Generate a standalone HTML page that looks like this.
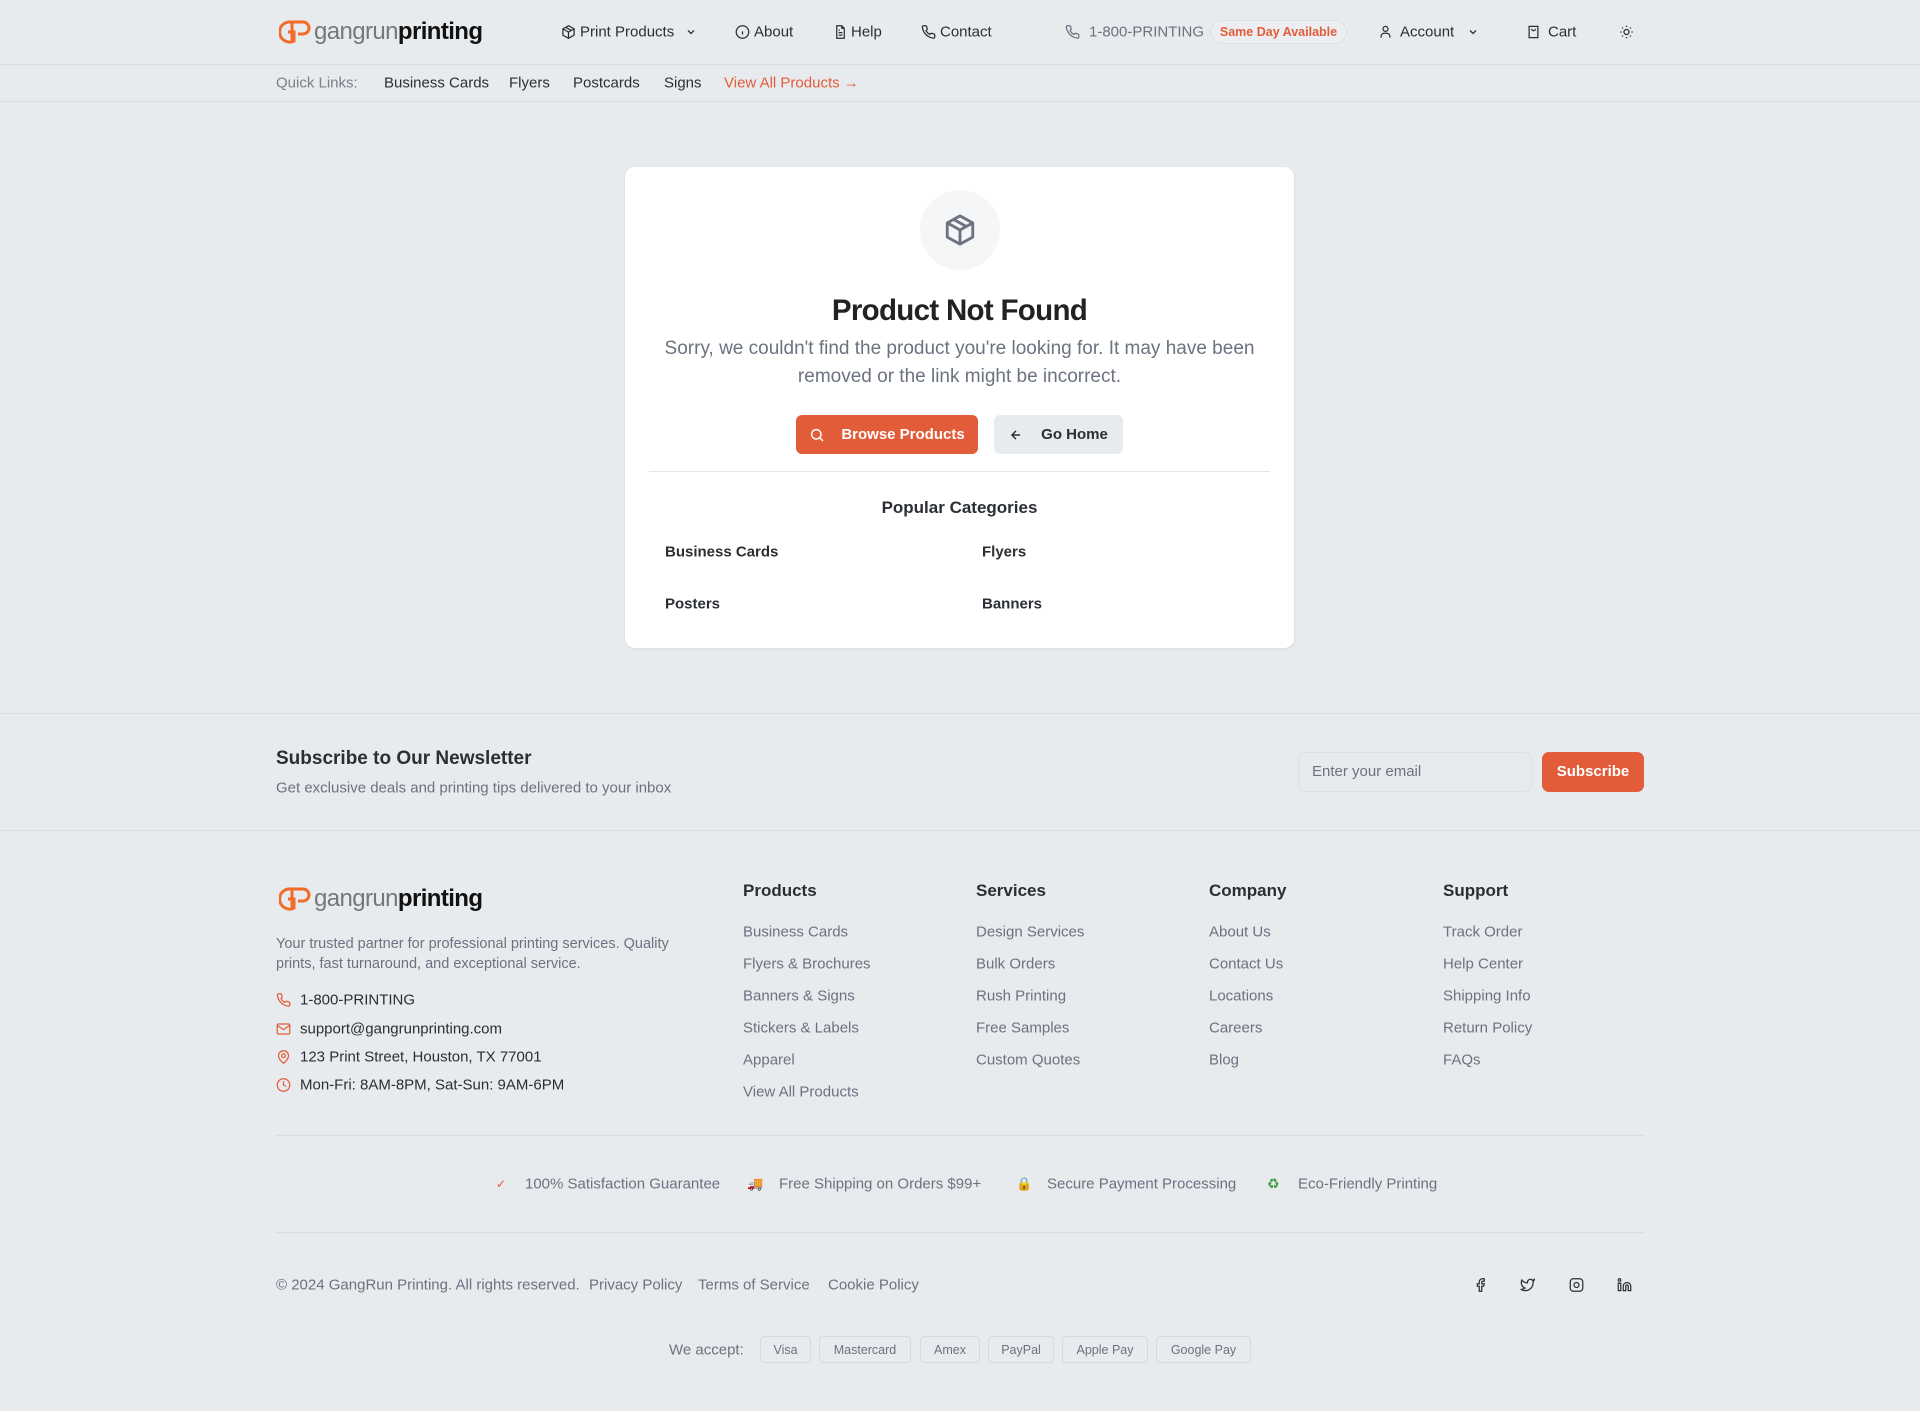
<!DOCTYPE html>
<html><head><meta charset="utf-8"><style>
*{margin:0;padding:0;box-sizing:border-box}
body{width:1920px;height:1411px;background:#e8ebee;font-family:"Liberation Sans",sans-serif;color:#1f2328;position:relative;overflow:hidden}
.a{position:absolute;white-space:nowrap}
.c{transform:translateY(-50%)}
svg{display:block}
.ic{position:absolute;transform:translateY(-50%)}
.hl{position:absolute;left:0;width:1920px;height:1px;background:#d9dde2}
.nav{font-size:15px;color:#2b2f33}
.gray{color:#6b7280}
.lk{font-size:15px;color:#6b7280}
.h4{font-size:17px;font-weight:bold;color:#2b2f33}
.pill{position:absolute;top:1336px;height:27px;border:1px solid #d6dadf;border-radius:4px;font-size:12.5px;color:#6b7280;display:flex;align-items:center;justify-content:center}
</style></head><body>

<!-- header -->
<div class="a c" style="left:279px;top:32px;display:flex;align-items:center">
<svg width="34" height="28" viewBox="0 0 34 28"><path d="M15 5 A10 10 0 1 0 15 23 L15 14 L9 14" fill="none" stroke="#f26b2b" stroke-width="3"/><path d="M13 24 L13 4 L24 4 A6 6 0 0 1 24 16 L19 16" fill="none" stroke="#f26b2b" stroke-width="3"/></svg>
<span style="font-size:24px;color:#777;letter-spacing:-0.6px;margin-left:1px">gangrun</span><span style="font-size:24px;font-weight:bold;color:#111;letter-spacing:-0.6px">printing</span>
</div>
<svg class="ic" style="left:561px;top:32px" width="15" height="15" viewBox="0 0 24 24" fill="none" stroke="#2b2f33" stroke-width="2"><path d="M12 2 3 7v10l9 5 9-5V7z M3 7l9 5 9-5 M12 12v10 M7.5 4.5l9 5"/></svg>
<div class="a c nav" style="left:580px;top:32px">Print Products</div>
<svg class="ic" style="left:685px;top:32px" width="12" height="12" viewBox="0 0 24 24" fill="none" stroke="#2b2f33" stroke-width="2.5"><path d="M6 9l6 6 6-6"/></svg>
<svg class="ic" style="left:735px;top:32px" width="15" height="15" viewBox="0 0 24 24" fill="none" stroke="#2b2f33" stroke-width="2"><circle cx="12" cy="12" r="10"/><path d="M12 16v-5M12 8h.01"/></svg>
<div class="a c nav" style="left:754px;top:32px">About</div>
<svg class="ic" style="left:833px;top:32px" width="15" height="15" viewBox="0 0 24 24" fill="none" stroke="#2b2f33" stroke-width="2"><path d="M14 2H6v20h12V6z M14 2v4h4 M9 13h6M9 17h6M9 9h2"/></svg>
<div class="a c nav" style="left:851px;top:32px">Help</div>
<svg class="ic" style="left:921px;top:32px" width="15" height="15" viewBox="0 0 24 24" fill="none" stroke="#2b2f33" stroke-width="2"><path d="M22 16.9v3a2 2 0 0 1-2.2 2 19.8 19.8 0 0 1-8.6-3.1 19.5 19.5 0 0 1-6-6A19.8 19.8 0 0 1 2.1 4.200 2 2 0 0 1 4.1 2h3a2 2 0 0 1 2 1.7c.1 1 .4 1.9.7 2.8a2 2 0 0 1-.5 2.1L8 9.9a16 16 0 0 0 6 6l1.3-1.3a2 2 0 0 1 2.1-.4c.9.3 1.8.6 2.8.7a2 2 0 0 1 1.7 2z"/></svg>
<div class="a c nav" style="left:940px;top:32px">Contact</div>
<svg class="ic" style="left:1065px;top:32px" width="15" height="15" viewBox="0 0 24 24" fill="none" stroke="#6b7280" stroke-width="2"><path d="M22 16.9v3a2 2 0 0 1-2.2 2 19.8 19.8 0 0 1-8.6-3.1 19.5 19.5 0 0 1-6-6A19.8 19.8 0 0 1 2.1 4.2 2 2 0 0 1 4.1 2h3a2 2 0 0 1 2 1.7c.1 1 .4 1.9.7 2.8a2 2 0 0 1-.5 2.1L8 9.9a16 16 0 0 0 6 6l1.3-1.3a2 2 0 0 1 2.1-.4c.9.3 1.8.6 2.8.7a2 2 0 0 1 1.7 2z"/></svg>
<div class="a c" style="left:1089px;top:32px;font-size:15px;color:#6b7280">1-800-PRINTING</div>
<div class="a c" style="left:1210px;top:32px;width:137px;height:24px;border:1px solid #dde0e4;border-radius:12px;background:#eceef1;color:#e25c3a;font-size:12.5px;font-weight:bold;display:flex;align-items:center;justify-content:center">Same Day Available</div>
<svg class="ic" style="left:1378px;top:32px" width="15" height="15" viewBox="0 0 24 24" fill="none" stroke="#2b2f33" stroke-width="2"><circle cx="12" cy="7" r="4"/><path d="M5 21v-2a5 5 0 0 1 5-5h4a5 5 0 0 1 5 5v2"/></svg>
<div class="a c nav" style="left:1400px;top:32px">Account</div>
<svg class="ic" style="left:1467px;top:32px" width="12" height="12" viewBox="0 0 24 24" fill="none" stroke="#2b2f33" stroke-width="2.5"><path d="M6 9l6 6 6-6"/></svg>
<svg class="ic" style="left:1526px;top:32px" width="15" height="15" viewBox="0 0 24 24" fill="none" stroke="#2b2f33" stroke-width="2"><path d="M5 3h14v18H5z M9 7a3 3 0 0 0 6 0"/></svg>
<div class="a c nav" style="left:1548px;top:32px">Cart</div>
<svg class="ic" style="left:1619px;top:32px" width="15" height="15" viewBox="0 0 24 24" fill="none" stroke="#2b2f33" stroke-width="2"><circle cx="12" cy="12" r="4"/><path d="M12 2v2M12 20v2M4.9 4.9l1.4 1.4M17.7 17.7l1.4 1.4M2 12h2M20 12h2M4.9 19.1l1.4-1.4M17.7 6.3l1.4-1.4"/></svg>
<div class="hl" style="top:64px"></div>
<div class="a c" style="left:276px;top:83px;font-size:15px;color:#7a8088">Quick Links:</div>
<div class="a c nav" style="left:384px;top:83px">Business Cards</div>
<div class="a c nav" style="left:509px;top:83px">Flyers</div>
<div class="a c nav" style="left:573px;top:83px">Postcards</div>
<div class="a c nav" style="left:664px;top:83px">Signs</div>
<div class="a c" style="left:724px;top:83px;font-size:15px;color:#e25c3a">View All Products →</div>
<div class="hl" style="top:101px"></div>

<!-- card -->
<div class="a" style="left:625px;top:167px;width:669px;height:481px;background:#fff;border-radius:10px;box-shadow:0 1px 3px rgba(0,0,0,.08)"></div>
<div class="a" style="left:920px;top:190px;width:80px;height:80px;border-radius:50%;background:#f5f6f8"></div>
<svg class="a" style="left:943px;top:213px" width="34" height="34" viewBox="0 0 24 24" fill="none" stroke="#6b7280" stroke-width="2" stroke-linejoin="round"><path d="M12 2 3 7v10l9 5 9-5V7z M3 7l9 5 9-5 M12 12v10 M7.5 4.5l9 5"/></svg>
<div class="a c" style="left:625px;width:669px;text-align:center;top:311px;font-size:29.5px;font-weight:bold;letter-spacing:-0.7px;color:#222">Product Not Found</div>
<div class="a" style="left:625px;width:669px;text-align:center;top:335px;font-size:19px;line-height:28px;color:#6b7280;white-space:normal;padding:0 10px">Sorry, we couldn't find the product you're looking for. It may have been removed or the link might be incorrect.</div>
<div class="a" style="left:796px;top:415px;width:182px;height:39px;background:#e25c3a;border-radius:6px;color:#fff;font-size:15px;font-weight:bold;display:flex;align-items:center;justify-content:center;gap:16px">
<svg width="16" height="16" viewBox="0 0 24 24" fill="none" stroke="#fff" stroke-width="2.2"><circle cx="11" cy="11" r="7"/><path d="M21 21l-5-5"/></svg>Browse Products</div>
<div class="a" style="left:994px;top:415px;width:129px;height:39px;background:#e8ebee;border-radius:6px;color:#2b2f33;font-size:15px;font-weight:bold;display:flex;align-items:center;justify-content:center;gap:18px">
<svg width="14" height="14" viewBox="0 0 24 24" fill="none" stroke="#2b2f33" stroke-width="2.4"><path d="M19 12H5M12 19l-7-7 7-7"/></svg>Go Home</div>
<div class="a" style="left:649px;top:471px;width:621px;height:1px;background:#e2e5e9"></div>
<div class="a c" style="left:625px;width:669px;text-align:center;top:508px;font-size:17px;font-weight:bold;color:#2b2f33">Popular Categories</div>
<div class="a c" style="left:665px;top:552px;font-size:15px;font-weight:bold;color:#2b2f33">Business Cards</div>
<div class="a c" style="left:982px;top:552px;font-size:15px;font-weight:bold;color:#2b2f33">Flyers</div>
<div class="a c" style="left:665px;top:604px;font-size:15px;font-weight:bold;color:#2b2f33">Posters</div>
<div class="a c" style="left:982px;top:604px;font-size:15px;font-weight:bold;color:#2b2f33">Banners</div>

<!-- newsletter -->
<div class="hl" style="top:713px"></div>
<div class="a c" style="left:276px;top:759px;font-size:19px;font-weight:bold;color:#2b2f33">Subscribe to Our Newsletter</div>
<div class="a c" style="left:276px;top:788px;font-size:15px;color:#6b7280">Get exclusive deals and printing tips delivered to your inbox</div>
<div class="a" style="left:1298px;top:752px;width:234px;height:40px;border:1px solid #dde0e4;border-radius:7px;font-size:15px;color:#6b7280;padding-left:13px;line-height:38px">Enter your email</div>
<div class="a" style="left:1542px;top:752px;width:102px;height:40px;background:#e25c3a;border-radius:7px;color:#fff;font-size:15px;font-weight:bold;text-align:center;line-height:40px">Subscribe</div>
<div class="hl" style="top:830px"></div>

<!-- footer -->
<div class="a c" style="left:279px;top:899px;display:flex;align-items:center">
<svg width="34" height="28" viewBox="0 0 34 28"><path d="M15 5 A10 10 0 1 0 15 23 L15 14 L9 14" fill="none" stroke="#f26b2b" stroke-width="3"/><path d="M13 24 L13 4 L24 4 A6 6 0 0 1 24 16 L19 16" fill="none" stroke="#f26b2b" stroke-width="3"/></svg>
<span style="font-size:24px;color:#777;letter-spacing:-0.6px;margin-left:1px">gangrun</span><span style="font-size:24px;font-weight:bold;color:#111;letter-spacing:-0.6px">printing</span>
</div>
<div class="a" style="left:276px;top:934px;font-size:14.5px;line-height:20px;color:#6b7280">Your trusted partner for professional printing services. Quality<br>prints, fast turnaround, and exceptional service.</div>
<svg class="ic" style="left:276px;top:1000px" width="15" height="15" viewBox="0 0 24 24" fill="none" stroke="#e25c3a" stroke-width="2"><path d="M22 16.9v3a2 2 0 0 1-2.2 2 19.8 19.8 0 0 1-8.6-3.1 19.5 19.5 0 0 1-6-6A19.8 19.8 0 0 1 2.1 4.2 2 2 0 0 1 4.1 2h3a2 2 0 0 1 2 1.7c.1 1 .4 1.9.7 2.8a2 2 0 0 1-.5 2.1L8 9.9a16 16 0 0 0 6 6l1.3-1.3a2 2 0 0 1 2.1-.4c.9.3 1.8.6 2.8.7a2 2 0 0 1 1.7 2z"/></svg>
<div class="a c" style="left:300px;top:1000px;font-size:15px;color:#2b2f33">1-800-PRINTING</div>
<svg class="ic" style="left:276px;top:1029px" width="15" height="15" viewBox="0 0 24 24" fill="none" stroke="#e25c3a" stroke-width="2"><rect x="2" y="4" width="20" height="16" rx="2"/><path d="M2 6l10 7 10-7"/></svg>
<div class="a c" style="left:300px;top:1029px;font-size:15px;color:#2b2f33">support@gangrunprinting.com</div>
<svg class="ic" style="left:276px;top:1057px" width="15" height="15" viewBox="0 0 24 24" fill="none" stroke="#e25c3a" stroke-width="2"><path d="M20 10c0 6-8 12-8 12S4 16 4 10a8 8 0 0 1 16 0z"/><circle cx="12" cy="10" r="3"/></svg>
<div class="a c" style="left:300px;top:1057px;font-size:15px;color:#2b2f33">123 Print Street, Houston, TX 77001</div>
<svg class="ic" style="left:276px;top:1085px" width="15" height="15" viewBox="0 0 24 24" fill="none" stroke="#e25c3a" stroke-width="2"><circle cx="12" cy="12" r="10"/><path d="M12 6v6l4 2"/></svg>
<div class="a c" style="left:300px;top:1085px;font-size:15px;color:#2b2f33">Mon-Fri: 8AM-8PM, Sat-Sun: 9AM-6PM</div>

<div class="a c h4" style="left:743px;top:891px">Products</div>
<div class="a c lk" style="left:743px;top:932px">Business Cards</div>
<div class="a c lk" style="left:743px;top:964px">Flyers &amp; Brochures</div>
<div class="a c lk" style="left:743px;top:996px">Banners &amp; Signs</div>
<div class="a c lk" style="left:743px;top:1028px">Stickers &amp; Labels</div>
<div class="a c lk" style="left:743px;top:1060px">Apparel</div>
<div class="a c lk" style="left:743px;top:1092px">View All Products</div>

<div class="a c h4" style="left:976px;top:891px">Services</div>
<div class="a c lk" style="left:976px;top:932px">Design Services</div>
<div class="a c lk" style="left:976px;top:964px">Bulk Orders</div>
<div class="a c lk" style="left:976px;top:996px">Rush Printing</div>
<div class="a c lk" style="left:976px;top:1028px">Free Samples</div>
<div class="a c lk" style="left:976px;top:1060px">Custom Quotes</div>

<div class="a c h4" style="left:1209px;top:891px">Company</div>
<div class="a c lk" style="left:1209px;top:932px">About Us</div>
<div class="a c lk" style="left:1209px;top:964px">Contact Us</div>
<div class="a c lk" style="left:1209px;top:996px">Locations</div>
<div class="a c lk" style="left:1209px;top:1028px">Careers</div>
<div class="a c lk" style="left:1209px;top:1060px">Blog</div>

<div class="a c h4" style="left:1443px;top:891px">Support</div>
<div class="a c lk" style="left:1443px;top:932px">Track Order</div>
<div class="a c lk" style="left:1443px;top:964px">Help Center</div>
<div class="a c lk" style="left:1443px;top:996px">Shipping Info</div>
<div class="a c lk" style="left:1443px;top:1028px">Return Policy</div>
<div class="a c lk" style="left:1443px;top:1060px">FAQs</div>

<div class="a" style="left:276px;top:1135px;width:1368px;height:1px;background:#d9dde2"></div>
<div class="a c" style="left:496px;top:1184px;font-size:12px;color:#e25c3a">✓</div>
<div class="a c lk" style="left:525px;top:1184px">100% Satisfaction Guarantee</div>
<div class="a c" style="left:747px;top:1184px;font-size:13px;color:#d9822b">🚚</div>
<div class="a c lk" style="left:779px;top:1184px">Free Shipping on Orders $99+</div>
<div class="a c" style="left:1016px;top:1184px;font-size:13px;color:#e0a81e">🔒</div>
<div class="a c lk" style="left:1047px;top:1184px">Secure Payment Processing</div>
<div class="a c" style="left:1267px;top:1184px;font-size:14px;color:#3a9a3a">♻</div>
<div class="a c lk" style="left:1298px;top:1184px">Eco-Friendly Printing</div>
<div class="a" style="left:276px;top:1232px;width:1368px;height:1px;background:#d9dde2"></div>

<div class="a c lk" style="left:276px;top:1285px">© 2024 GangRun Printing. All rights reserved.</div>
<div class="a c lk" style="left:589px;top:1285px">Privacy Policy</div>
<div class="a c lk" style="left:698px;top:1285px">Terms of Service</div>
<div class="a c lk" style="left:828px;top:1285px">Cookie Policy</div>
<svg class="ic" style="left:1473px;top:1285px" width="15" height="15" viewBox="0 0 24 24" fill="none" stroke="#2b2f33" stroke-width="2"><path d="M18 2h-3a5 5 0 0 0-5 5v3H7v4h3v8h4v-8h3l1-4h-4V7a1 1 0 0 1 1-1h3z"/></svg>
<svg class="ic" style="left:1520px;top:1285px" width="15" height="15" viewBox="0 0 24 24" fill="none" stroke="#2b2f33" stroke-width="2"><path d="M23 3a10.9 10.9 0 0 1-3.1 1.5 4.5 4.5 0 0 0-7.9 3v1A10.7 10.7 0 0 1 3 4s-4 9 5 13a11.6 11.6 0 0 1-7 2c9 5 20 0 20-11.5a4.5 4.5 0 0 0-.1-.8A7.7 7.7 0 0 0 23 3z"/></svg>
<svg class="ic" style="left:1569px;top:1285px" width="15" height="15" viewBox="0 0 24 24" fill="none" stroke="#2b2f33" stroke-width="2"><rect x="2" y="2" width="20" height="20" rx="5"/><circle cx="12" cy="12" r="4"/><path d="M17.5 6.5h.01"/></svg>
<svg class="ic" style="left:1617px;top:1285px" width="15" height="15" viewBox="0 0 24 24" fill="none" stroke="#2b2f33" stroke-width="2"><path d="M16 8a6 6 0 0 1 6 6v7h-4v-7a2 2 0 0 0-4 0v7h-4v-7a6 6 0 0 1 6-6z"/><rect x="2" y="9" width="4" height="12"/><circle cx="4" cy="4" r="2"/></svg>

<div class="a c" style="left:669px;top:1350px;font-size:15px;color:#6b7280">We accept:</div>
<div class="pill" style="left:760px;width:51px">Visa</div>
<div class="pill" style="left:819px;width:92px">Mastercard</div>
<div class="pill" style="left:920px;width:60px">Amex</div>
<div class="pill" style="left:988px;width:66px">PayPal</div>
<div class="pill" style="left:1062px;width:86px">Apple Pay</div>
<div class="pill" style="left:1156px;width:95px">Google Pay</div>
</body></html>
